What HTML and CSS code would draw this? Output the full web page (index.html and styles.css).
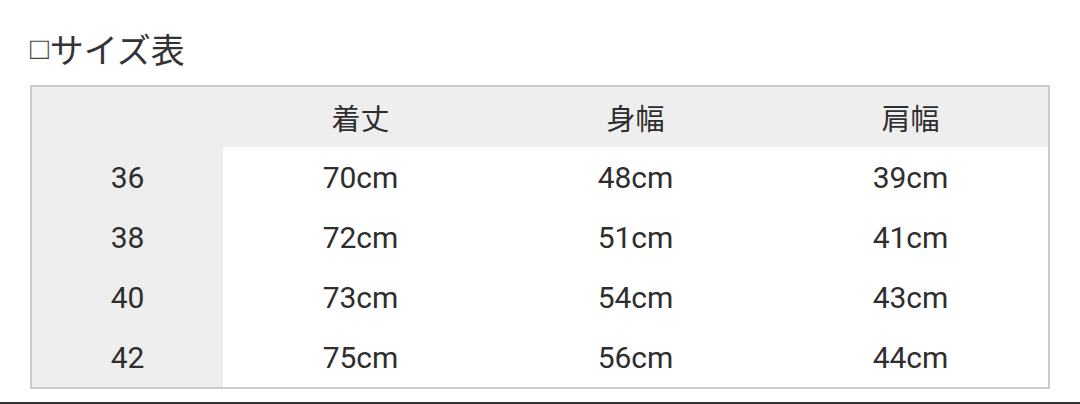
FILE: index.html
```html
<!DOCTYPE html>
<html lang="ja">
<head>
<meta charset="utf-8">
<link rel="stylesheet" href="styles.css">
</head>
<body>
<div class="page">
  <h2 class="title"><span class="box">□</span>サイズ表</h2>
  <div class="table">
    <div class="cell head corner"></div>
    <div class="cell head">着丈</div>
    <div class="cell head">身幅</div>
    <div class="cell head">肩幅</div>

    <div class="cell size">36</div>
    <div class="cell">70cm</div>
    <div class="cell">48cm</div>
    <div class="cell">39cm</div>

    <div class="cell size">38</div>
    <div class="cell">72cm</div>
    <div class="cell">51cm</div>
    <div class="cell">41cm</div>

    <div class="cell size">40</div>
    <div class="cell">73cm</div>
    <div class="cell">54cm</div>
    <div class="cell">43cm</div>

    <div class="cell size">42</div>
    <div class="cell">75cm</div>
    <div class="cell">56cm</div>
    <div class="cell">44cm</div>
  </div>
  <div class="rule"></div>
</div>
</body>
</html>
```

FILE: styles.css
```css
html, body {
  margin: 0;
  padding: 0;
  background: #ffffff;
}

body {
  font-family: Roboto, "Noto Sans CJK JP", sans-serif;
  color: #2e2e2e;
  width: 1080px;
  height: 404px;
  overflow: hidden;
}

.page {
  display: flex;
  flex-direction: column;
  height: 404px;
}

.title {
  flex: none;
  margin: 0;
  padding: 0 0 17px 30px;
  height: 85px;
  box-sizing: border-box;
  font-family: "Noto Sans CJK JP", sans-serif;
  font-weight: normal;
  font-size: 34px;
  line-height: 38px;
  color: #333333;
  display: flex;
  align-items: flex-end;
}

.box {
  font-family: "Liberation Sans", sans-serif;
  font-size: 31px;
  color: #444444;
  margin-right: 1px;
}

.table {
  flex: none;
  margin-left: 30px;
  width: 1020px;
  box-sizing: border-box;
  border: 2px solid #cbcbcb;
  display: grid;
  grid-template-columns: 191px 275px 275px 275px;
  grid-auto-rows: 60px;
}

.cell {
  display: flex;
  align-items: center;
  justify-content: center;
  font-size: 30px;
  background: #ffffff;
}

.head {
  background: #eeeeee;
  font-family: "Noto Sans CJK JP", sans-serif;
  font-size: 29px;
}

.size {
  background: #eeeeee;
}

.rule {
  flex: none;
  margin-top: auto;
  height: 2px;
  background: #333333;
}
```
